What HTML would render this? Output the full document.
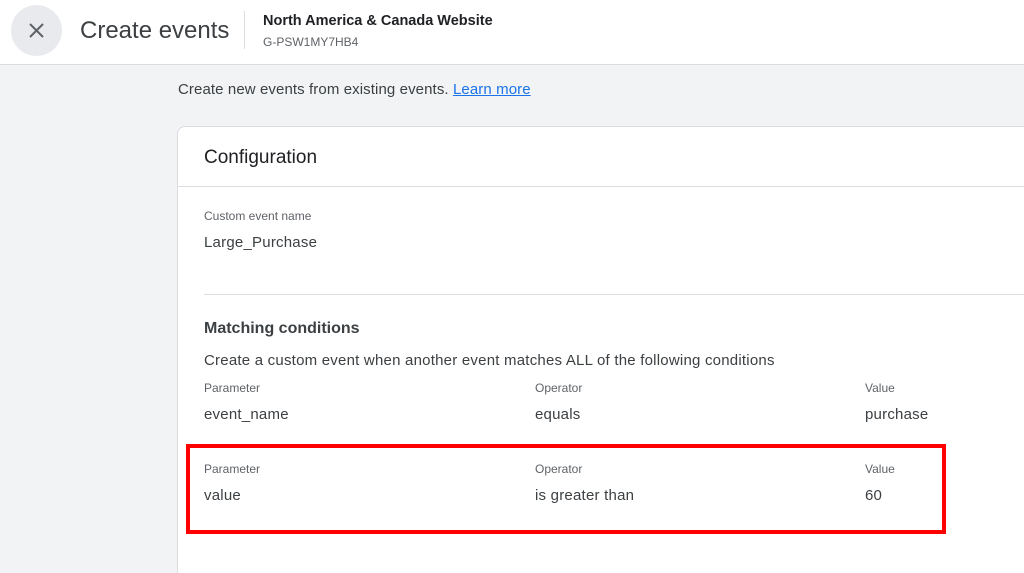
<!DOCTYPE html>
<html><head><style>
html,body{margin:0;width:1024px;height:573px;overflow:hidden}
body{background:#f1f3f4;font-family:"Liberation Sans",sans-serif;color:#3c4043;position:relative}
.hdr{position:absolute;left:0;top:0;width:1024px;height:64px;background:#fff;border-bottom:1px solid #dadce0}
.t{position:absolute;white-space:nowrap}
.card{position:absolute;left:177px;top:126px;width:860px;height:450px;background:#fff;border:1px solid #dadce0;border-radius:8px}
.lbl{font-size:12px;color:#5f6368}
.val{font-size:15px;color:#3c4043;letter-spacing:0.22px}
</style></head><body>
<div class="hdr">
<div style="position:absolute;left:11px;top:5px;width:51px;height:51px;border-radius:50%;background:#e8eaed"></div>
<svg style="position:absolute;left:28px;top:22px" width="17" height="17" viewBox="0 0 17 17"><path d="M2 2L15 15M15 2L2 15" stroke="#5f6368" stroke-width="2"/></svg>
<div class="t" style="left:80px;top:17px;font-size:24px;color:#3c4043">Create events</div>
<div style="position:absolute;left:244px;top:11px;width:1px;height:38px;background:#dadce0"></div>
<div class="t" style="left:263px;top:13px;font-size:14.5px;font-weight:bold;color:#202124">North America &amp; Canada Website</div>
<div class="t" style="left:263px;top:35px;font-size:12px;color:#5f6368">G-PSW1MY7HB4</div>
</div>
<div class="t" style="left:178px;top:81px;font-size:15px;letter-spacing:0.1px">Create new events from existing events. <span style="color:#1a73e8;text-decoration:underline">Learn more</span></div>
<div class="card">
<div class="t" style="left:26px;top:20px;font-size:19px;color:#202124">Configuration</div>
<div style="position:absolute;left:0;top:59px;width:860px;height:1px;background:#dadce0"></div>
<div class="t lbl" style="left:26px;top:82px">Custom event name</div>
<div class="t val" style="left:26px;top:107px">Large_Purchase</div>
<div style="position:absolute;left:26px;top:167px;width:834px;height:1px;background:#dadce0"></div>
<div class="t" style="left:26px;top:193px;font-size:16px;font-weight:bold;color:#3c4043">Matching conditions</div>
<div class="t val" style="left:26px;top:225px">Create a custom event when another event matches ALL of the following conditions</div>
<div class="t lbl" style="left:26px;top:254px">Parameter</div>
<div class="t lbl" style="left:357px;top:254px">Operator</div>
<div class="t lbl" style="left:687px;top:254px">Value</div>
<div class="t val" style="left:26px;top:279px">event_name</div>
<div class="t val" style="left:357px;top:279px">equals</div>
<div class="t val" style="left:687px;top:279px">purchase</div>
<div class="t lbl" style="left:26px;top:335px">Parameter</div>
<div class="t lbl" style="left:357px;top:335px">Operator</div>
<div class="t lbl" style="left:687px;top:335px">Value</div>
<div class="t val" style="left:26px;top:360px">value</div>
<div class="t val" style="left:357px;top:360px">is greater than</div>
<div class="t val" style="left:687px;top:360px">60</div>
</div>
<div style="position:absolute;left:186px;top:444px;width:752px;height:82px;border:4px solid #f00"></div>
</body></html>
